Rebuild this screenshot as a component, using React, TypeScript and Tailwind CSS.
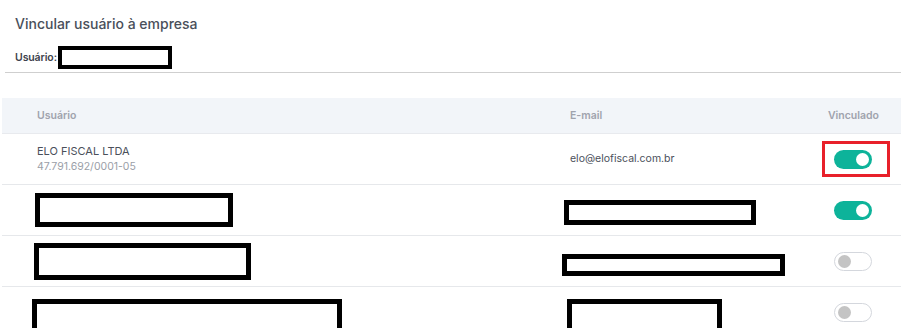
import React from 'react';

type Row = {
  name?: string;
  doc?: string;
  email?: string;
  linked: boolean;
  highlight?: boolean;
  redactName?: string;
  redactEmail?: string;
};

const rows: Row[] = [
  { name: 'ELO FISCAL LTDA', doc: '47.791.692/0001-05', email: 'elo@elofiscal.com.br', linked: true, highlight: true },
  { linked: true, redactName: 'w-[198px] h-[34px] ml-[-2px]', redactEmail: 'w-[192px] h-[25px] ml-[-6px] mt-[5px]' },
  { linked: false, redactName: 'w-[217px] h-[37px] ml-[-3px]', redactEmail: 'w-[223px] h-[22px] ml-[-8px] mt-[8px]' },
  { linked: false, redactName: 'w-[310px] h-[36px] ml-[-5px] mt-[10px]', redactEmail: 'w-[155px] h-[36px] ml-[-3px] mt-[9px]' },
];

function Toggle({ on }: { on: boolean }) {
  return on ? (
    <div className="w-[38px] h-[19px] rounded-full bg-[#0db39a] flex items-center justify-end pr-[3px]">
      <div className="w-[13px] h-[13px] rounded-full bg-white" />
    </div>
  ) : (
    <div className="w-[38px] h-[19px] rounded-full bg-white border border-[#d4d7dd] flex items-center pl-[3px]">
      <div className="w-[13px] h-[13px] rounded-full bg-[#c4c4c4]" />
    </div>
  );
}

export default function App() {
  return (
    <div className="w-[901px] h-[328px] overflow-hidden bg-white" style={{ fontFamily: 'Inter, "Noto Sans", sans-serif' }}>
      <div className="pl-[15px] pt-[15px]">
        <h2 className="text-[14px] leading-[18px] font-medium text-[#4a4f5a]">Vincular usuário à empresa</h2>
        <div className="flex items-center mt-[13px] h-[23px]">
          <span className="text-[10.5px] font-semibold text-[#3d424c] tracking-[-0.1px]">Usuário:</span>
          <div className="w-[114px] h-[23px] border-[4px] border-black ml-px" />
        </div>
      </div>
      <div className="ml-[5px] mt-[3px] border-t border-[#cfcfcf]" />

      <div className="ml-[2px] mt-[25px]">
        <div className="h-[36px] bg-[#f2f5f9] border-b border-[#e8eaee] flex items-center text-[10.5px] font-semibold text-[#a0a3ad]">
          <div className="pl-[35px] w-[568px]">Usuário</div>
          <div className="flex-1">E-mail</div>
          <div className="w-[100px] text-right pr-[22px]">Vinculado</div>
        </div>
        {rows.map((r, i) => (
          <div key={i} className="h-[51px] border-b border-[#e6e8eb] flex items-center text-[10.5px]">
            <div className="pl-[35px] w-[568px] self-stretch flex flex-col justify-center">
              {r.redactName ? (
                <div className={`${r.redactName} border-[5px] border-black`} />
              ) : (
                <>
                  <div className="text-[#4a4f5a] leading-[15px] text-[11px]">{r.name}</div>
                  <div className="text-[#9a9ea7] leading-[15px]">{r.doc}</div>
                </>
              )}
            </div>
            <div className="flex-1 self-stretch flex flex-col justify-center">
              {r.redactEmail ? (
                <div className={`${r.redactEmail} border-[5px] border-black`} />
              ) : (
                <div className="text-[#4a4f5a]">{r.email}</div>
              )}
            </div>
            <div className="w-[100px] flex justify-end pr-[29px]">
              {r.highlight ? (
                <div className="border-[3px] border-[#e8202a] w-[68px] h-[36px] flex items-center pl-[9px] -mr-[18px] ml-[-30px]">
                  <Toggle on={r.linked} />
                </div>
              ) : (
                <Toggle on={r.linked} />
              )}
            </div>
          </div>
        ))}
      </div>
    </div>
  );
}
